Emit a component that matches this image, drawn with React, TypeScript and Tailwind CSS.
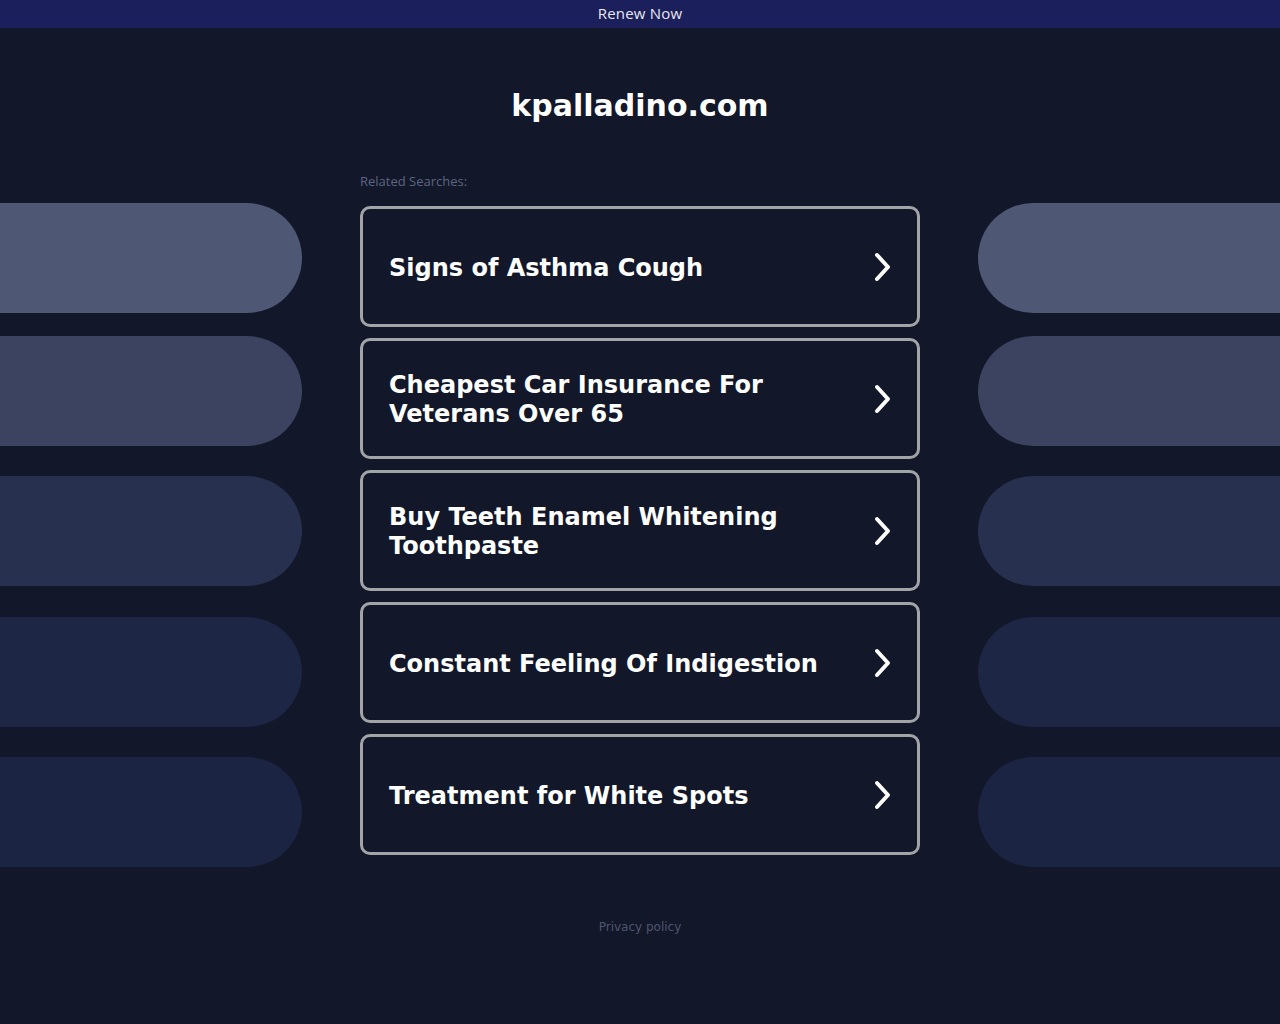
const searches = [
  "Signs of Asthma Cough",
  "Cheapest Car Insurance For Veterans Over 65",
  "Buy Teeth Enamel Whitening Toothpaste",
  "Constant Feeling Of Indigestion",
  "Treatment for White Spots",
];

const pills = [
  { mt: "mt-[175px]", bg: "bg-[#4e5774]" },
  { mt: "mt-[23px]", bg: "bg-[#3b4360]" },
  { mt: "mt-[30px]", bg: "bg-[#283050]" },
  { mt: "mt-[31px]", bg: "bg-[#1e2646]" },
  { mt: "mt-[30px]", bg: "bg-[#1c2443]" },
];

function Chevron() {
  return (
    <svg width="22" height="32" viewBox="0 0 22 32" fill="none" className="shrink-0">
      <path d="M6 4 L17 16 L6 28" stroke="white" strokeWidth="4" strokeLinecap="round" strokeLinejoin="round" />
    </svg>
  );
}

function PillColumn({ side }: { side: "left" | "right" }) {
  return (
    <div className="flex flex-col">
      {pills.map((p, i) => (
        <div
          key={i}
          className={`${p.mt} ${p.bg} h-[110px] w-full ${side === "left" ? "rounded-r-[55px]" : "rounded-l-[55px]"}`}
        />
      ))}
    </div>
  );
}

export default function App() {
  return (
    <div className="min-h-[1024px] bg-[#121729] font-['DejaVu_Sans',sans-serif]">
      <div className="h-[28px] bg-[#1b1f5b] flex items-center justify-center">
        <span className="text-[15px] leading-[18px] text-[#e6e8f2] font-medium font-['Open_Sans',sans-serif] tracking-[0.2px] -mt-[2px]">Renew Now</span>
      </div>

      <div className="flex">
        <div className="w-[302px]">
          <PillColumn side="left" />
        </div>

        <div className="w-[560px] ml-[58px] mr-[58px]">
          <h1 className="mt-[58px] text-center text-[30px] leading-[40px] font-bold text-white">kpalladino.com</h1>
          <div className="mt-[47px] text-[13px] leading-[16px] text-[#5d6580] font-['Open_Sans',sans-serif]">Related Searches:</div>
          <div className="mt-[17px] flex flex-col gap-[11px]">
            {searches.map((s) => (
              <a
                key={s}
                href="#"
                className="h-[121px] border-[3px] border-[#a3a4a8] rounded-[10px] flex items-center justify-between pl-[26px] pr-[24px]"
              >
                <span className="text-[24px] leading-[29px] font-bold text-white pr-6 pt-[3px]">{s}</span>
                <Chevron />
              </a>
            ))}
          </div>
          <div className="mt-[63px] text-center text-[12px] text-[#4f566e]">Privacy policy</div>
        </div>

        <div className="flex-1">
          <PillColumn side="right" />
        </div>
      </div>
    </div>
  );
}
